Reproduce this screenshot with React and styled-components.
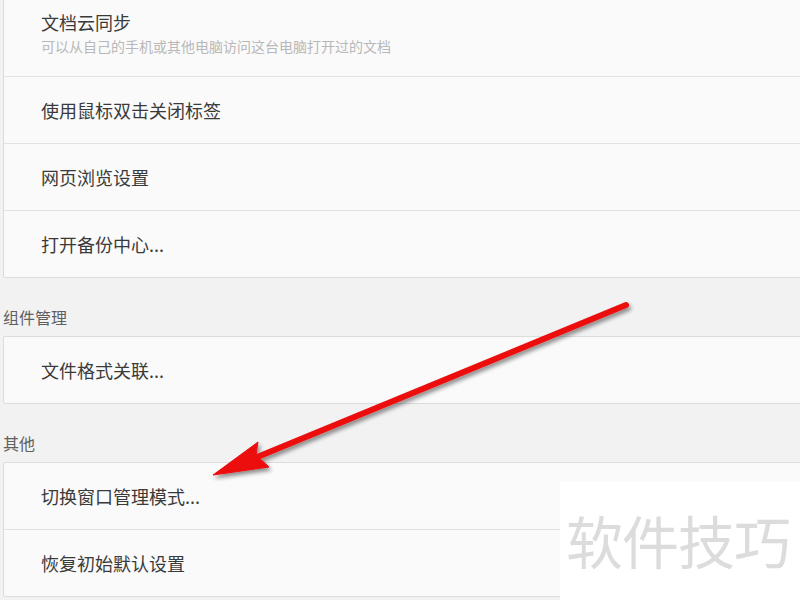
import React from "react";
import styled, { createGlobalStyle } from "styled-components";

const Global = createGlobalStyle`
  html, body { margin: 0; padding: 0; background: #f2f2f2; overflow: hidden; }
  body { font-family: "Noto Sans CJK SC", "Noto Sans", sans-serif; }
  #root { width: 800px; height: 600px; position: relative; overflow: hidden; }
`;

const Page = styled.div`
  width: 820px;
  padding-left: 3px;
  margin-top: -11px;
`;

const Card = styled.div`
  background: #fafafa;
  border: 1px solid #dcdcdc;
  border-radius: 2px;
`;

const Row = styled.div`
  min-height: 66px;
  box-sizing: border-box;
  padding: ${(p) => (p.$tall ? "20px" : "0")} 0 ${(p) => (p.$tall ? "20px" : "0")} 37px;
  display: flex;
  flex-direction: column;
  justify-content: center;
  & + & {
    border-top: 1px solid #e2e2e2;
    min-height: 67px;
  }
`;

const Title = styled.div`
  font-size: 18px;
  line-height: 24px;
  color: #3a3a3a;
`;

const Sub = styled.div`
  font-size: 14px;
  line-height: 20px;
  color: #b8b8b8;
  margin-top: 2px;
`;

const SectionLabel = styled.div`
  font-size: 16px;
  line-height: 20px;
  color: #606060;
  padding: 29px 0 9px;
`;

const Watermark = styled.div`
  position: absolute;
  left: 560px;
  top: 482px;
  width: 240px;
  height: 118px;
  background: #ffffff;
  display: flex;
  align-items: center;
  padding-left: 6px;
  box-sizing: border-box;
  font-size: 57px;
  letter-spacing: -1px;
  color: #dcdcdc;
  line-height: 1;
  padding-bottom: 4px;
`;

const Overlay = styled.svg`
  position: absolute;
  left: 0;
  top: 0;
  width: 800px;
  height: 600px;
  pointer-events: none;
`;

function Arrow() {
  return (
    <Overlay viewBox="0 0 800 600">
      <defs>
        <filter id="sh" x="-20%" y="-20%" width="140%" height="140%">
          <feGaussianBlur in="SourceAlpha" stdDeviation="2" />
          <feOffset dx="2" dy="3" result="b" />
          <feComponentTransfer>
            <feFuncA type="linear" slope="0.45" />
          </feComponentTransfer>
          <feMerge>
            <feMergeNode />
            <feMergeNode in="SourceGraphic" />
          </feMerge>
        </filter>
      </defs>
      <g filter="url(#sh)" fill="#ec1010" stroke="#ec1010">
        <line x1="626" y1="305" x2="250" y2="460" strokeWidth="6" strokeLinecap="round" />
        <polygon points="213,475 258,442 256,455 269,467" strokeWidth="1" strokeLinejoin="round" />
      </g>
    </Overlay>
  );
}

export default function App() {
  return (
    <>
      <Global />
      <Page>
        <Card>
          <Row $tall>
            <Title>文档云同步</Title>
            <Sub>可以从自己的手机或其他电脑访问这台电脑打开过的文档</Sub>
          </Row>
          <Row><Title>使用鼠标双击关闭标签</Title></Row>
          <Row><Title>网页浏览设置</Title></Row>
          <Row><Title>打开备份中心...</Title></Row>
        </Card>
        <SectionLabel>组件管理</SectionLabel>
        <Card>
          <Row><Title>文件格式关联...</Title></Row>
        </Card>
        <SectionLabel>其他</SectionLabel>
        <Card>
          <Row><Title>切换窗口管理模式...</Title></Row>
          <Row><Title>恢复初始默认设置</Title></Row>
        </Card>
      </Page>
      <Arrow />
      <Watermark>软件技巧</Watermark>
    </>
  );
}
